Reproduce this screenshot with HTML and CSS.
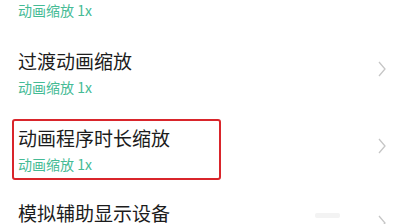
FILE: index.html
```html
<!DOCTYPE html>
<html lang="zh-CN">
<head>
<meta charset="utf-8">
<link rel="stylesheet" href="styles.css">
</head>
<body>
<div class="list">
  <div class="row first">
    <div class="text">
      <div class="sub">动画缩放 1x</div>
    </div>
    <svg class="chev" width="8" height="16" viewBox="0 0 8 16"><polyline points="1,1 7,8 1,15" fill="none" stroke="#c6c6c6" stroke-width="1.3"/></svg>
  </div>
  <div class="row">
    <div class="text">
      <div class="title">过渡动画缩放</div>
      <div class="sub">动画缩放 1x</div>
    </div>
    <svg class="chev" width="8" height="16" viewBox="0 0 8 16"><polyline points="1,1 7,8 1,15" fill="none" stroke="#c6c6c6" stroke-width="1.3"/></svg>
  </div>
  <div class="row marked">
    <div class="text">
      <div class="title">动画程序时长缩放</div>
      <div class="sub">动画缩放 1x</div>
    </div>
    <svg class="chev" width="8" height="16" viewBox="0 0 8 16"><polyline points="1,1 7,8 1,15" fill="none" stroke="#c6c6c6" stroke-width="1.3"/></svg>
    <span class="highlight"></span>
  </div>
  <div class="row last">
    <div class="text">
      <div class="title">模拟辅助显示设备</div>
    </div>
    <svg class="chev" width="8" height="16" viewBox="0 0 8 16"><polyline points="1,1 7,8 1,15" fill="none" stroke="#c6c6c6" stroke-width="1.3"/></svg>
    <span class="smudge"></span>
  </div>
</div>
</body>
</html>
```

FILE: styles.css
```css
html, body {
  margin: 0;
  padding: 0;
  background: #ffffff;
  width: 400px;
  height: 224px;
  overflow: hidden;
}
body {
  font-family: "Noto Sans CJK SC", "Noto Sans", sans-serif;
}
.list {
  margin-top: -43px;
  display: flex;
  flex-direction: column;
}
.row {
  height: 77px;
  box-sizing: border-box;
  display: flex;
  align-items: flex-start;
  justify-content: space-between;
  padding: 14px 14px 0 18px;
  position: relative;
}
.row.first .text {
  padding-top: 29px;
}
.text {
  display: flex;
  flex-direction: column;
  gap: 3px;
}
.title {
  font-size: 19px;
  line-height: 26px;
  color: #1c1c1c;
}
.row.last .title {
  margin-top: -2px;
}
.sub {
  font-size: 14px;
  line-height: 20px;
  color: #45bb95;
}
.chev {
  margin-top: 13px;
}
.highlight {
  position: absolute;
  left: 12px;
  top: 8px;
  width: 205px;
  height: 57px;
  border: 2.5px solid #d9252b;
  border-radius: 3px;
}
.smudge {
  position: absolute;
  left: 315px;
  top: 25px;
  width: 25px;
  height: 5px;
  background: #f3f3f3;
  border-radius: 2px;
}
```
